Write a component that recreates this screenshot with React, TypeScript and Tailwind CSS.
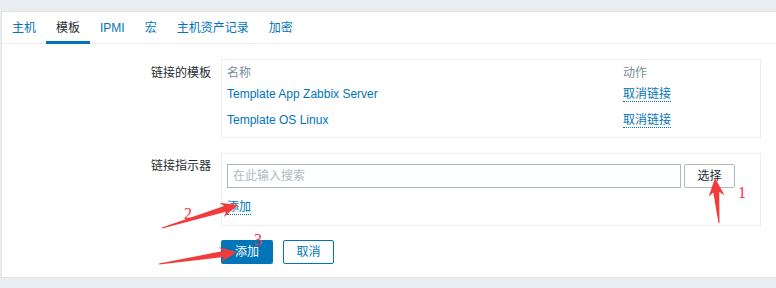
const tabs = ["主机", "模板", "IPMI", "宏", "主机资产记录", "加密"];

type Pt = [number, number];

// red annotation arrow: thin tail widening into a barbed head
function arrowPoints(tail: Pt, tip: Pt, headLen: number, headW: number, neckW: number) {
  const dx = tip[0] - tail[0];
  const dy = tip[1] - tail[1];
  const len = Math.hypot(dx, dy);
  const ux = dx / len;
  const uy = dy / len;
  const nx = -uy;
  const ny = ux;
  const neck: Pt = [tip[0] - ux * headLen * 0.8, tip[1] - uy * headLen * 0.8];
  const base: Pt = [tip[0] - ux * headLen, tip[1] - uy * headLen];
  const pts: Pt[] = [
    [tail[0] - nx * 0.5, tail[1] - ny * 0.5],
    [neck[0] - (nx * neckW) / 2, neck[1] - (ny * neckW) / 2],
    [base[0] - (nx * headW) / 2, base[1] - (ny * headW) / 2],
    tip,
    [base[0] + (nx * headW) / 2, base[1] + (ny * headW) / 2],
    [neck[0] + (nx * neckW) / 2, neck[1] + (ny * neckW) / 2],
    [tail[0] + nx * 0.5, tail[1] + ny * 0.5],
  ];
  return pts.map((p) => p.join(",")).join(" ");
}

function Annotations() {
  return (
    <svg className="absolute inset-0 pointer-events-none" width="776" height="288">
      <polygon points={arrowPoints([719, 223], [715, 178], 18, 16, 6)} fill="#f23b3b" />
      <polygon points={arrowPoints([162, 228], [238, 205], 17, 15, 6)} fill="#f23b3b" />
      <polygon points={arrowPoints([159, 264], [237, 252], 17, 15, 6)} fill="#f23b3b" />
      <text x="738" y="198" fill="#ff2f3f" fontSize="16" fontFamily="Liberation Serif, serif">1</text>
      <text x="184" y="219" fill="#ff2f3f" fontSize="16" fontFamily="Liberation Serif, serif">2</text>
      <text x="254" y="245" fill="#ff2f3f" fontSize="16" fontFamily="Liberation Serif, serif">3</text>
    </svg>
  );
}

export default function App() {
  return (
    <div className="relative w-[776px] h-[288px] overflow-hidden bg-[#ebeef1] pt-[11px] pl-px font-['Liberation_Sans','Noto_Sans_CJK_SC',sans-serif] text-[12px] text-[#1f2c33]">
      <div className="h-[267px] bg-white border border-r-0 border-[#dfe4e7]">
        {/* tabs */}
        <div className="flex h-[32px] border-b border-[#ebeef1]">
          {tabs.map((t, i) => (
            <div
              key={t}
              className={
                i === 1
                  ? "h-[32px] px-[10px] pt-[9px] leading-[14px] border-b-[3px] border-[#0275b8] text-[#1f2c33]"
                  : "h-[32px] px-[10px] pt-[9px] leading-[14px] text-[#0275b8]"
              }
            >
              {t}
            </div>
          ))}
        </div>

        {/* form */}
        <div className="pt-[15px]">
          <div className="flex">
            <div className="w-[210px] pr-[1px] pt-[7px] text-right leading-[14px]">链接的模板</div>
            <div className="ml-[9px] w-[540px] border border-[#ebeef1] pt-[6px] pb-[10px] px-[5px] leading-[14px]">
              <div className="flex text-[#768d99]">
                <div className="w-[396px]">名称</div>
                <div>动作</div>
              </div>
              <div className="flex mt-[7px]">
                <div className="w-[396px] text-[#0275b8]">Template App Zabbix Server</div>
                <div><span className="text-[#0275b8] border-b border-dotted border-[#0275b8]">取消链接</span></div>
              </div>
              <div className="flex mt-[12px]">
                <div className="w-[396px] text-[#0275b8]">Template OS Linux</div>
                <div><span className="text-[#0275b8] border-b border-dotted border-[#0275b8]">取消链接</span></div>
              </div>
            </div>
          </div>

          <div className="flex mt-[15px]">
            <div className="w-[210px] pr-[1px] pt-[6px] text-right leading-[14px]">链接指示器</div>
            <div className="ml-[9px] w-[540px] border border-[#ebeef1] pt-[10px] pb-[11px] px-[5px] leading-[14px]">
              <div className="flex gap-[3px]">
                <div className="w-[454px] h-[24px] border border-[#acbbc2] px-[5px] flex items-center text-[#acbbc2]">
                  在此输入搜索
                </div>
                <div className="w-[51px] h-[24px] border border-[#acbbc2] rounded-[2px] flex items-center justify-center">
                  选择
                </div>
              </div>
              <div className="mt-[12px]">
                <span className="text-[#0275b8] border-b border-dotted border-[#0275b8]">添加</span>
              </div>
            </div>
          </div>

          <div className="flex gap-[10px] ml-[219px] mt-[14px]">
            <div className="w-[52px] h-[24px] rounded-[2px] bg-[#0275b8] text-white flex items-center justify-center">
              添加
            </div>
            <div className="w-[51px] h-[24px] rounded-[2px] border border-[#0275b8] text-[#0275b8] flex items-center justify-center">
              取消
            </div>
          </div>
        </div>
      </div>
      <Annotations />
    </div>
  );
}
